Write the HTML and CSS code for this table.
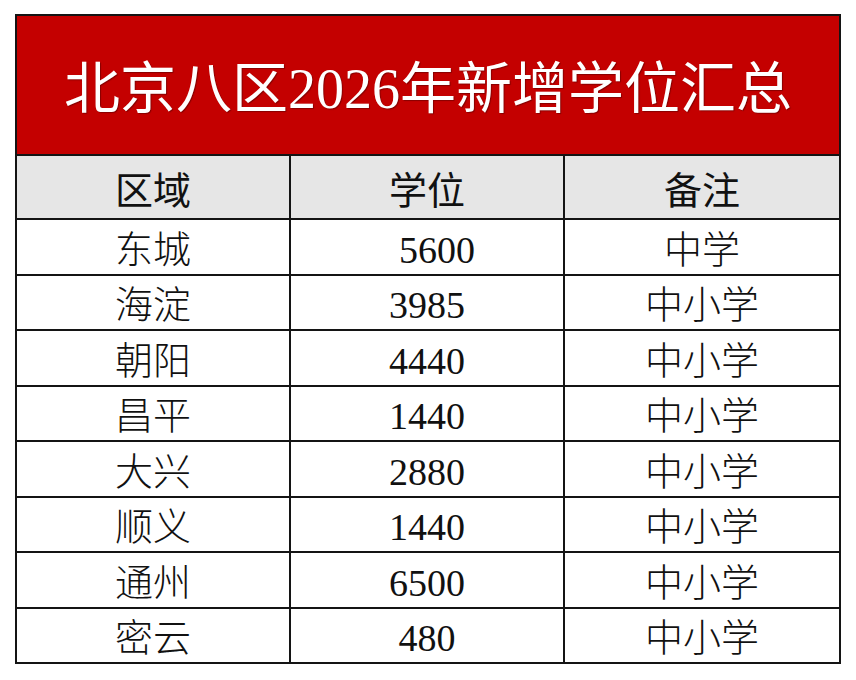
FILE: index.html
```html
<!DOCTYPE html>
<html lang="zh-CN">
<head>
<meta charset="utf-8">
<title>北京八区2026年新增学位汇总</title>
<link rel="stylesheet" href="styles.css">
</head>
<body>
<div class="sheet">
  <div class="title">北京八区2026年新增学位汇总</div>
  <div class="grid">
    <div class="cell head">区域</div>
    <div class="cell head">学位</div>
    <div class="cell head">备注</div>

    <div class="cell">东城</div>
    <div class="cell indent">5600</div>
    <div class="cell">中学</div>

    <div class="cell">海淀</div>
    <div class="cell">3985</div>
    <div class="cell">中小学</div>

    <div class="cell">朝阳</div>
    <div class="cell">4440</div>
    <div class="cell">中小学</div>

    <div class="cell">昌平</div>
    <div class="cell">1440</div>
    <div class="cell">中小学</div>

    <div class="cell">大兴</div>
    <div class="cell">2880</div>
    <div class="cell">中小学</div>

    <div class="cell">顺义</div>
    <div class="cell">1440</div>
    <div class="cell">中小学</div>

    <div class="cell">通州</div>
    <div class="cell">6500</div>
    <div class="cell">中小学</div>

    <div class="cell">密云</div>
    <div class="cell">480</div>
    <div class="cell">中小学</div>
  </div>
</div>
</body>
</html>
```
FILE: styles.css
```css
html, body {
  margin: 0;
  padding: 0;
  background: #ffffff;
}

body {
  font-family: "Liberation Serif", "Noto Sans CJK SC", serif;
  color: #111111;
}

.sheet {
  box-sizing: border-box;
  width: 826px;
  margin: 14px 0 0 15px;
  border: 2px solid #141414;
  background: #141414;
}

.title {
  box-sizing: border-box;
  height: 138px;
  padding-top: 8px;
  background: #c40000;
  color: #ffffff;
  font-size: 56px;
  font-weight: 400;
  line-height: 1;
  display: flex;
  align-items: center;
  justify-content: center;
  text-shadow: 1px 1px 1px rgba(60, 0, 0, 0.45);
  margin-bottom: 2px;
}

.grid {
  display: grid;
  grid-template-columns: 272px 272px 1fr;
  grid-template-rows: 62px repeat(8, 53.5px);
  gap: 2px;
  background: #141414;
}

.cell {
  box-sizing: border-box;
  background: #ffffff;
  font-size: 38px;
  font-weight: 300;
  line-height: 1;
  display: flex;
  align-items: center;
  justify-content: center;
  padding-top: 6px;
}

.head {
  background: #e6e6e6;
  font-weight: 400;
  padding-top: 8px;
}

.indent {
  padding-left: 20px;
}
```
